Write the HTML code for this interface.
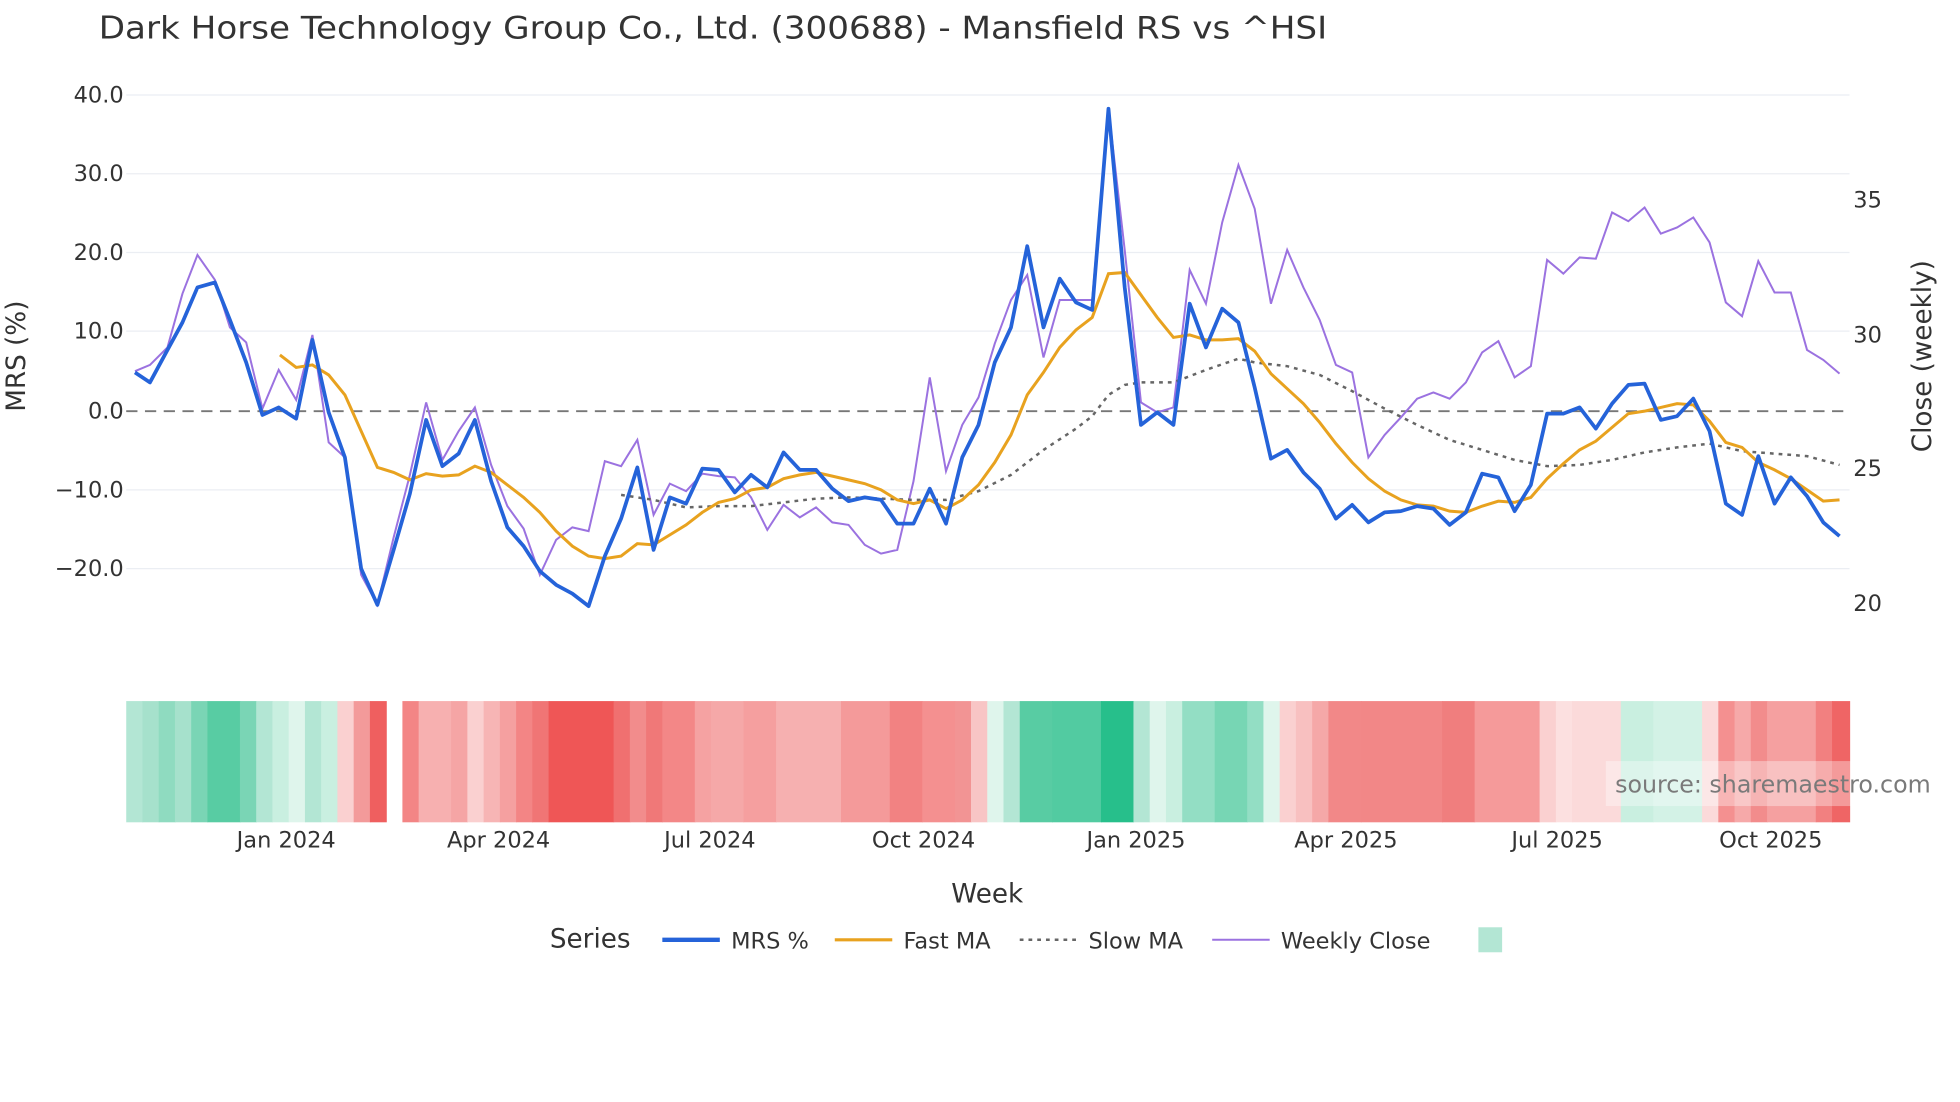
<!DOCTYPE html>
<html><head><meta charset="utf-8"><style>
html,body{margin:0;padding:0;background:#fff;}
svg{display:block;font-family:"DejaVu Sans","Liberation Sans",sans-serif;}
</style></head><body>
<svg width="1960" height="1102" viewBox="0 0 1568.4 881.8" xmlns="http://www.w3.org/2000/svg">
<rect width="1570" height="885" fill="#fff"/>
<text x="79" y="31" font-size="25" fill="#333" textLength="983" lengthAdjust="spacingAndGlyphs">Dark Horse Technology Group Co., Ltd. (300688) - Mansfield RS vs ^HSI</text>
<g stroke="#ebeef3" stroke-width="1">
<line x1="101" x2="1480" y1="76" y2="76"/><line x1="101" x2="1480" y1="139" y2="139"/>
<line x1="101" x2="1480" y1="202" y2="202"/><line x1="101" x2="1480" y1="265" y2="265"/>
<line x1="101" x2="1480" y1="392" y2="392"/><line x1="101" x2="1480" y1="455" y2="455"/>
</g>
<line x1="101" x2="1480" y1="329" y2="329" stroke="#777" stroke-width="1.5" stroke-dasharray="9,6"/>
<g font-size="18" fill="#333" text-anchor="end">
<text x="99" y="82">40.0</text><text x="99" y="145">30.0</text><text x="99" y="208">20.0</text>
<text x="99" y="271">10.0</text><text x="99" y="335">0.0</text><text x="99" y="398">−10.0</text><text x="99" y="461">−20.0</text>
</g>
<g font-size="18" fill="#333">
<text x="1483" y="166">35</text><text x="1483" y="274">30</text><text x="1483" y="381">25</text><text x="1483" y="489">20</text>
</g>
<text transform="translate(20,285) rotate(-90)" font-size="21" fill="#333" text-anchor="middle">MRS (%)</text>
<text transform="translate(1545,285) rotate(-90)" font-size="21" fill="#333" text-anchor="middle">Close (weekly)</text>

<polyline fill="none" stroke="#9b72e0" stroke-width="1.6" points="108,297 120,292 134,278 146,235 158,204 172,224 184,262 197,274 210,327 223,296 237,320 250,268 263,354 276,366 289,460 302,484 315,430 328,380 341,322 354,368 367,345 380,326 393,372 406,405 419,423 432,460 445,432 458,422 471,425 484,369 497,373 510,352 523,412 536,387 549,393 562,379 575,381 588,382 601,398 614,424 627,404 640,414 653,406 666,418 679,420 692,436 705,443 718,440 731,385 744,302 757,377 770,340 783,318 796,275 809,240 822,220 835,286 848,240 861,240 874,240 887,87 900,200 913,322 926,330 939,326 952,216 965,243 978,178 991,132 1004,167 1017,243 1030,200 1043,230 1056,256 1069,292 1082,298 1095,366 1108,348 1121,334 1134,319 1147,314 1160,319 1173,306 1186,282 1199,273 1212,302 1225,293 1238,208 1251,219 1264,206 1277,207 1290,170 1303,177 1316,166 1329,187 1342,182 1355,174 1368,194 1381,242 1394,253 1407,209 1420,234 1433,234 1446,280 1459,288 1472,299"/>
<polyline fill="none" stroke="#666" stroke-width="2" stroke-dasharray="3,4" points="497,396 523,400 549,406 575,405 601,405 627,402 653,399 679,398 705,399 731,400 757,400 783,393 809,380 835,360 861,343 874,333 887,316 900,308 913,306 939,306 965,296 991,287 1004,290 1030,293 1056,300 1082,313 1108,327 1134,340 1160,352 1186,360 1212,368 1238,373 1264,372 1290,368 1316,362 1342,358 1368,355 1394,361 1420,363 1446,365 1472,372"/>
<polyline fill="none" stroke="#e8a21f" stroke-width="2.4" points="224,284 237,294 250,292 263,300 276,316 289,345 302,374 315,378 328,384 341,379 354,381 367,380 380,373 393,378 406,388 419,398 432,410 445,425 458,437 471,445 484,447 497,445 510,435 523,436 536,428 549,420 562,410 575,402 588,399 601,392 614,390 627,383 640,380 653,378 666,381 679,384 692,387 705,392 718,400 731,403 744,400 757,407 770,400 783,388 796,370 809,348 822,316 835,298 848,278 861,264 874,254 887,219 900,218 913,236 926,254 939,270 952,268 965,272 978,272 991,271 1004,281 1017,299 1030,311 1043,323 1056,338 1069,355 1082,370 1095,383 1108,393 1121,400 1134,404 1147,405 1160,409 1173,410 1186,405 1199,401 1212,402 1225,398 1238,383 1251,371 1264,360 1277,353 1290,342 1303,331 1316,329 1329,326 1342,323 1355,324 1368,337 1381,354 1394,358 1407,370 1420,376 1433,383 1446,392 1459,401 1472,400"/>
<polyline fill="none" stroke="#2563d9" stroke-width="3" stroke-linejoin="round" points="108,298 120,306 134,280 146,258 158,230 172,226 184,256 197,290 210,332 223,326 237,335 250,272 263,330 276,366 289,455 302,484 315,440 328,395 341,336 354,373 367,363 380,336 393,385 406,422 419,437 432,457 445,468 458,475 471,485 484,445 497,415 510,374 523,440 536,398 549,403 562,375 575,376 588,394 601,380 614,390 627,362 640,376 653,376 666,391 679,401 692,398 705,400 718,419 731,419 744,391 757,419 770,366 783,340 796,290 809,262 822,197 835,262 848,223 861,242 874,248 887,87 900,230 913,340 926,330 939,340 952,243 965,278 978,247 991,258 1004,310 1017,367 1030,360 1043,378 1056,391 1069,415 1082,404 1095,418 1108,410 1121,409 1134,405 1147,407 1160,420 1173,410 1186,379 1199,382 1212,409 1225,388 1238,331 1251,331 1264,326 1277,343 1290,323 1303,308 1316,307 1329,336 1342,333 1355,319 1368,345 1381,403 1394,412 1407,365 1420,403 1433,382 1446,397 1459,418 1472,429"/>

<g id="heat"></g>
<rect x="1285" y="609" width="285" height="36" fill="#fff" opacity="0.35"/>
<text x="1545" y="634" font-size="19" fill="#7a7a7a" text-anchor="end">source: sharemaestro.com</text>

<g font-size="18" fill="#333" text-anchor="middle">
<text x="229" y="678">Jan 2024</text><text x="399" y="678">Apr 2024</text><text x="568" y="678">Jul 2024</text>
<text x="739" y="678">Oct 2024</text><text x="909" y="678">Jan 2025</text><text x="1077" y="678">Apr 2025</text>
<text x="1246" y="678">Jul 2025</text><text x="1417" y="678">Oct 2025</text>
</g>
<text x="790" y="722" font-size="21" fill="#333" text-anchor="middle">Week</text>
<text x="440" y="758" font-size="21" fill="#333">Series</text>
<line x1="530" x2="576" y1="752" y2="752" stroke="#2563d9" stroke-width="3.5"/>
<text x="585" y="759" font-size="18" fill="#333">MRS %</text>
<line x1="668" x2="714" y1="752" y2="752" stroke="#e8a21f" stroke-width="2.5"/>
<text x="723" y="759" font-size="18" fill="#333">Fast MA</text>
<line x1="816" x2="862" y1="752" y2="752" stroke="#666" stroke-width="2" stroke-dasharray="3,4"/>
<text x="871" y="759" font-size="18" fill="#333">Slow MA</text>
<line x1="970" x2="1016" y1="752" y2="752" stroke="#9b72e0" stroke-width="1.6"/>
<text x="1025" y="759" font-size="18" fill="#333">Weekly Close</text>
<rect x="1183" y="742" width="19" height="20" fill="#b3e6d4"/>
</svg>
<script>
var s=[[101,114,"#b3e6d4"],[114,127,"#a6e1cc"],[127,140,"#8fdbc0"],[140,153,"#a6e1cc"],[153,166,"#7ad5b5"],[166,192,"#58cca3"],[192,205,"#7ad5b5"],[205,218,"#b3e6d4"],[218,231,"#c9efe0"],[231,244,"#dff5ec"],[244,257,"#b3e6d4"],[257,270,"#c9efe0"],[270,283,"#fad0d0"],[283,296,"#f39a9a"],[296,309,"#ef5f5f"],[322,335,"#f38585"],[335,361,"#f7b0b0"],[361,374,"#f5a5a5"],[374,387,"#fad0d0"],[387,400,"#f7b5b5"],[400,413,"#f5a0a0"],[413,426,"#f38585"],[426,439,"#f07575"],[439,491,"#ef5656"],[491,504,"#f07070"],[504,517,"#f28c8c"],[517,530,"#f07878"],[530,556,"#f38787"],[556,569,"#f5a2a2"],[569,595,"#f5a8a8"],[595,621,"#f59f9f"],[621,673,"#f6b0b0"],[673,712,"#f49a9a"],[712,738,"#f28282"],[738,764,"#f49090"],[764,777,"#f29494"],[777,790,"#f8c5c5"],[790,803,"#dff5ec"],[803,816,"#b3e6d4"],[816,842,"#58cca3"],[842,881,"#52cba1"],[881,907,"#27bf8b"],[907,920,"#b3e6d4"],[920,933,"#dff5ec"],[933,946,"#c9efe0"],[946,972,"#93dec4"],[972,998,"#77d6b4"],[998,1011,"#93dec4"],[1011,1024,"#dff5ec"],[1024,1037,"#fad0d0"],[1037,1050,"#f8c0c0"],[1050,1063,"#f5a8a8"],[1063,1089,"#f28888"],[1089,1154,"#f28787"],[1154,1180,"#f07e7e"],[1180,1232,"#f59a9a"],[1232,1245,"#fad0d0"],[1245,1258,"#fce0e0"],[1258,1297,"#fbdada"],[1297,1323,"#c9efe0"],[1323,1362,"#d3f2e6"],[1362,1375,"#fbdada"],[1375,1388,"#f49090"],[1388,1401,"#f6a9a9"],[1401,1414,"#f28c8c"],[1414,1453,"#f5a0a0"],[1453,1466,"#f28080"],[1466,1480,"#ef6565"]];
var g=document.getElementById("heat"),h="";
s.forEach(function(a){h+='<rect x="'+a[0]+'" y="561" width="'+(a[1]-a[0]+0.5)+'" height="97" fill="'+a[2]+'"/>';});
g.innerHTML=h;
</script>
</body></html>
